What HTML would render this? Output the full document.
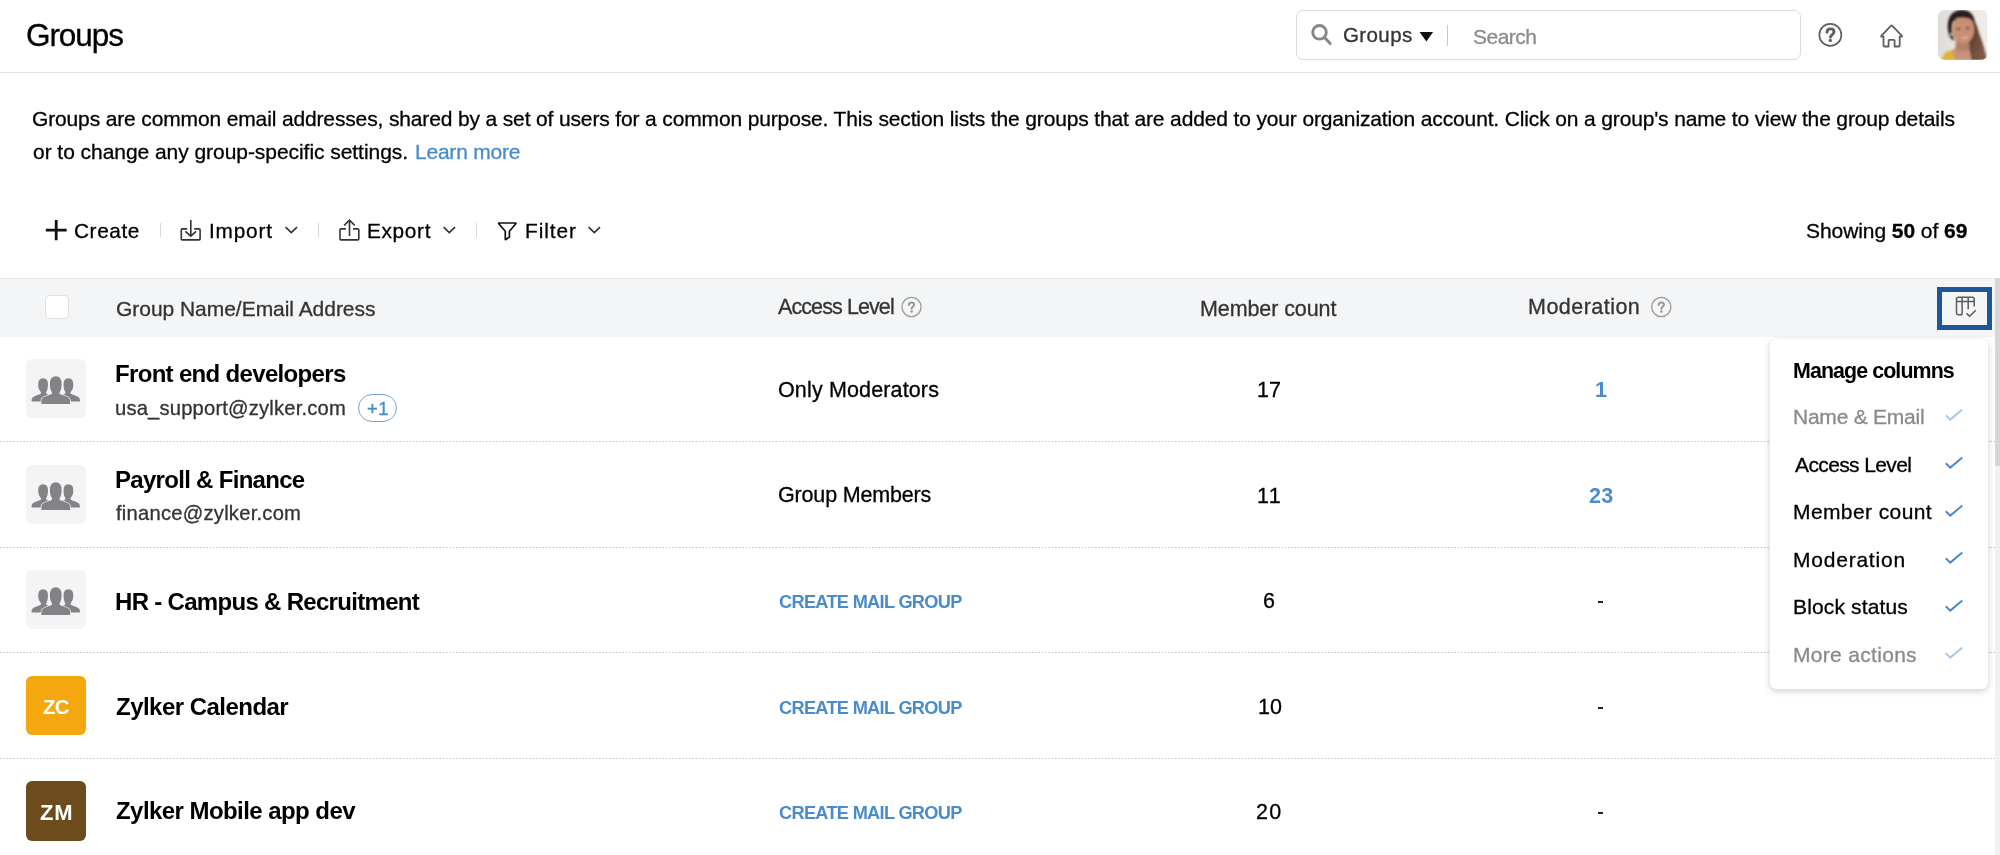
<!DOCTYPE html>
<html>
<head>
<meta charset="utf-8">
<title>Groups</title>
<style>
html,body{margin:0;padding:0;}
body{width:2000px;height:855px;position:relative;overflow:hidden;background:#fff;font-family:"Liberation Sans",sans-serif;color:#000;}
.t{position:absolute;white-space:nowrap;line-height:1;z-index:3;will-change:transform;}
.abs{position:absolute;}
.sep{position:absolute;left:0;width:1995px;height:1.3px;background-image:linear-gradient(to right,#c9c9c9 55%,rgba(255,255,255,0) 55%);background-size:3.33px 1.3px;}
.grp{position:absolute;left:26.2px;width:59.5px;height:59px;border-radius:6px;background:#f4f4f5;}
.grp svg{position:absolute;left:0;top:0;}
.av{position:absolute;left:26.2px;width:59.8px;height:59.5px;border-radius:6px;}
.chk{position:absolute;left:1944px;width:20px;height:15px;z-index:3;}
.cnt{position:absolute;}
</style>
</head>
<body>
<!-- ===== top bar ===== -->
<div class="abs" style="left:0;top:71.6px;width:2000px;height:1.2px;background:#e2e2e2;"></div>

<div class="abs" style="left:1295.7px;top:10.2px;width:505.1px;height:49.4px;border:1.2px solid #dcdcdc;border-radius:7px;box-sizing:border-box;"></div>
<svg class="abs" style="left:1305px;top:18px" width="32" height="32" viewBox="0 0 32 32">
 <circle cx="14.5" cy="14.35" r="6.8" fill="none" stroke="#878787" stroke-width="2.9"/>
 <line x1="19.6" y1="19.6" x2="25.2" y2="25.6" stroke="#878787" stroke-width="2.9" stroke-linecap="round"/>
</svg>
<svg class="abs" style="left:1418px;top:30px" width="17" height="13" viewBox="0 0 17 13"><path d="M1.6 2 L15.1 2 L8.35 11.5 Z" fill="#111"/></svg>
<div class="abs" style="left:1446.6px;top:24.6px;width:1.4px;height:21px;background:#c9c9c9;"></div>

<svg class="abs" style="left:1814px;top:18px" width="34" height="34" viewBox="0 0 34 34">
 <circle cx="16.35" cy="16.9" r="11.0" fill="none" stroke="#606060" stroke-width="1.7"/>
 <path d="M13 14.2 C13 11.6 14.5 10.9 16.5 10.9 C18.6 10.9 20 12 20 13.8 C20 16.1 17.4 16.5 16.5 19" fill="none" stroke="#606060" stroke-width="2.9" stroke-linecap="round"/>
 <circle cx="16.3" cy="22.4" r="1.7" fill="#606060"/>
</svg>
<svg class="abs" style="left:1876px;top:20px" width="32" height="32" viewBox="0 0 32 32">
 <path d="M7.5 16.6 L7.5 25.6 Q7.5 26.5 8.4 26.5 L12.6 26.5 L12.6 20.6 Q12.6 19.9 13.3 19.9 L17.9 19.9 Q18.6 19.9 18.6 20.6 L18.6 26.5 L22.8 26.5 Q23.7 26.5 23.7 25.6 L23.7 16.6 L25.4 16.6 Q26.5 16.6 25.7 15.7 L16.1 5.6 Q15.6 5.1 15.1 5.6 L5.5 15.7 Q4.7 16.6 5.8 16.6 Z" fill="none" stroke="#5f5f5f" stroke-width="1.8" stroke-linejoin="round"/>
</svg>

<!-- avatar photo -->
<svg class="abs" style="left:1938.2px;top:10.1px" width="49.6" height="49.8" viewBox="0 0 50 50">
 <defs>
  <clipPath id="avc"><rect x="0" y="0" width="50" height="50" rx="6" ry="6"/></clipPath>
  <filter id="bl" x="-20%" y="-20%" width="140%" height="140%"><feGaussianBlur stdDeviation="1.0"/></filter>
  <linearGradient id="bgg" x1="0" y1="0" x2="1" y2="0"><stop offset="0" stop-color="#dedddb"/><stop offset="1" stop-color="#f1ece7"/></linearGradient>
  <linearGradient id="hairr" x1="0" y1="0" x2="1" y2="1"><stop offset="0" stop-color="#3a2820"/><stop offset="0.5" stop-color="#6f4d3c"/><stop offset="1" stop-color="#8b6450"/></linearGradient>
 </defs>
 <g clip-path="url(#avc)">
  <rect x="0" y="0" width="50" height="50" fill="url(#bgg)"/>
  <g filter="url(#bl)">
   <path d="M31 6 C37 9 39 14 41 22 C44 30 47 38 50 52 L31 52 C32 42 31 30 31 12 Z" fill="url(#hairr)"/>
   <path d="M7 49.5 C9 43 13 40 18 39 L31 39 C33 43 34 48 33 52 L6 52 Z" fill="#c9937a"/>
   <path d="M18 30 L31 30 L31.5 40 C27 42 21 42 17.5 40 Z" fill="#b5806a"/>
   <path d="M15.9 30.5 C12 29 10 24 9.8 16 C10 7 14 0.5 23 0 C31 -0.5 36 4 37 11 L35 14 C31 8 22 6 15 12 C13 18 14 26 17 31 Z" fill="#2b1e1a"/>
   <ellipse cx="25.5" cy="19.5" rx="11" ry="14.3" fill="#c78f73"/>
   <path d="M14.5 6 C18 3 28 2 34 6 L36 11 C31 7 22 6 15 9.5 Z" fill="#2b1e1a"/>
   <path d="M21 26 Q26 29.8 31.5 25.8 Q27 31.5 21 26 Z" fill="#f4ebe7"/>
   <ellipse cx="20.5" cy="18.8" rx="1.7" ry="0.9" fill="#3d2722"/>
   <ellipse cx="30" cy="18.3" rx="1.7" ry="0.9" fill="#3d2722"/>
   <circle cx="13.4" cy="24.4" r="1" fill="#eee"/>
   <path d="M0 52 L3.7 49.5 L7.1 42.7 C9 41.5 11.5 40.8 13.9 40.7 L18 52 Z" fill="#dfb43a"/>
  </g>
 </g>
</svg>

<!-- ===== toolbar icons ===== -->
<svg class="abs" style="left:44px;top:218px" width="24" height="24" viewBox="0 0 24 24">
 <path d="M12.2 2.1 L12.2 22.2 M1.8 12.1 L22.7 12.1" stroke="#111" stroke-width="2.8" stroke-linecap="butt"/>
</svg>
<div class="abs" style="left:159.6px;top:223px;width:1.2px;height:14px;background:#d8d8d8;"></div>
<svg class="abs" style="left:174px;top:214px" width="32" height="32" viewBox="0 0 32 32">
 <path d="M13.2 14.9 L8.3 14.9 Q7.3 14.9 7.3 15.9 L7.3 24.9 Q7.3 25.9 8.3 25.9 L25.1 25.9 Q26.1 25.9 26.1 24.9 L26.1 15.9 Q26.1 14.9 25.1 14.9 L20.2 14.9" fill="none" stroke="#333" stroke-width="1.6"/>
 <path d="M16.8 6 L16.8 22 M11.3 17.3 L16.8 22.2 L22.1 17.3" fill="none" stroke="#333" stroke-width="1.6" stroke-linejoin="miter"/>
</svg>
<svg class="abs" style="left:284px;top:222px" width="16" height="16" viewBox="0 0 16 16"><path d="M1.6 5.2 L7.3 10.6 L13 5.2" fill="none" stroke="#333" stroke-width="1.7"/></svg>
<div class="abs" style="left:318.1px;top:223px;width:1.2px;height:14px;background:#d8d8d8;"></div>
<svg class="abs" style="left:333px;top:214px" width="32" height="32" viewBox="0 0 32 32">
 <path d="M12.9 14.9 L8 14.9 Q7 14.9 7 15.9 L7 24.9 Q7 25.9 8 25.9 L24.8 25.9 Q25.8 25.9 25.8 24.9 L25.8 15.9 Q25.8 14.9 24.8 14.9 L20 14.9" fill="none" stroke="#333" stroke-width="1.6"/>
 <path d="M16.5 22 L16.5 6.4 M11.2 11.4 L16.5 6.2 L21.7 11.4" fill="none" stroke="#333" stroke-width="1.6"/>
</svg>
<svg class="abs" style="left:442px;top:222px" width="16" height="16" viewBox="0 0 16 16"><path d="M1.6 5.2 L7.3 10.6 L13 5.2" fill="none" stroke="#333" stroke-width="1.7"/></svg>
<div class="abs" style="left:476.2px;top:223px;width:1.2px;height:14px;background:#d8d8d8;"></div>
<svg class="abs" style="left:492px;top:214px" width="32" height="32" viewBox="0 0 32 32">
 <path d="M7 9 L23.6 9 Q24.4 9 23.8 9.7 L17.4 17.2 L17.4 23 L13.8 25.5 Q13.3 25.8 13.3 25.2 L13.3 17.2 L6.8 9.7 Q6.2 9 7 9 Z" fill="none" stroke="#111" stroke-width="1.7" stroke-linejoin="round"/>
</svg>
<svg class="abs" style="left:587px;top:222px" width="16" height="16" viewBox="0 0 16 16"><path d="M1.6 5.2 L7.3 10.6 L13 5.2" fill="none" stroke="#333" stroke-width="1.7"/></svg>

<!-- ===== table header ===== -->
<div class="abs" style="left:0;top:278px;width:1995px;height:58.7px;background:#f4f5f7;"></div>
<div class="abs" style="left:0;top:278px;width:1995px;height:1.2px;background:#e9eaec;"></div>
<div class="abs" style="left:44.6px;top:294.6px;width:24.6px;height:24.6px;background:#fff;border:1.5px solid #dedfe1;border-radius:4px;box-sizing:border-box;"></div>
<svg class="abs" style="left:900px;top:296px" width="23" height="23" viewBox="0 0 23 23">
 <circle cx="11.5" cy="11" r="9.6" fill="none" stroke="#9a9a9a" stroke-width="1.3"/>
 <path d="M8.9 9 C8.9 7.2 10.1 6.5 11.5 6.5 C13 6.5 14.1 7.3 14.1 8.7 C14.1 10.4 12.1 10.6 11.6 12.7" fill="none" stroke="#9a9a9a" stroke-width="2.1" stroke-linecap="round"/>
 <circle cx="11.6" cy="15.5" r="1.25" fill="#9a9a9a"/>
</svg>
<svg class="abs" style="left:1650px;top:296px" width="23" height="23" viewBox="0 0 23 23">
 <circle cx="11.3" cy="11" r="9.6" fill="none" stroke="#9a9a9a" stroke-width="1.3"/>
 <path d="M8.7 9 C8.7 7.2 9.9 6.5 11.3 6.5 C12.8 6.5 13.9 7.3 13.9 8.7 C13.9 10.4 11.9 10.6 11.4 12.7" fill="none" stroke="#9a9a9a" stroke-width="2.1" stroke-linecap="round"/>
 <circle cx="11.4" cy="15.5" r="1.25" fill="#9a9a9a"/>
</svg>
<!-- manage columns button -->
<div class="abs" style="left:1937px;top:287px;width:54.7px;height:42.8px;border:5px solid #1d5799;box-sizing:border-box;"></div>
<svg class="abs" style="left:1950px;top:292px" width="30" height="30" viewBox="0 0 30 30">
 <path d="M12.1 22.8 L8.5 22.8 Q6.5 22.8 6.5 20.8 L6.5 7.3 Q6.5 5.3 8.5 5.3 L22.2 5.3 Q24.2 5.3 24.2 7.3 L24.2 14.4 M12.1 5.3 L12.1 22.8 M6.5 9.5 L24.2 9.5 M18.2 5.3 L18.2 17.2" fill="none" stroke="#5b5b5b" stroke-width="1.5"/>
 <path d="M16.5 21.4 L19.6 24.2 L25.8 18.2" fill="none" stroke="#5b5b5b" stroke-width="1.5"/>
</svg>
<!-- scrollbar -->
<div class="abs" style="left:1995px;top:278px;width:5px;height:577px;background:#f1f1f1;"></div>
<div class="abs" style="left:1995px;top:278px;width:5px;height:187.7px;background:#d6d6d6;"></div>

<!-- ===== rows ===== -->
<div class="sep" style="top:441px;"></div>
<div class="sep" style="top:546.6px;"></div>
<div class="sep" style="top:652.1px;"></div>
<div class="sep" style="top:757.7px;"></div>

<svg width="0" height="0" style="position:absolute">
 <defs>
  <g id="ppl">
   <path d="M5.6 42.6 L5.6 40.5 Q5.8 38 9 36.9 L14.4 34.9 Q15.3 34.4 15 33.2 Q12.2 30.5 12.2 25.6 Q12.2 19.2 17.1 19.2 Q22 19.2 22 25.6 Q22 30.5 20.2 33.2 Q19.9 34.4 20.8 34.9 L26 36.9 Q28 37.6 28.5 38.5 L28.5 42.6 Z" fill="#838387"/>
   <path d="M53.9 42.6 L53.9 40.5 Q53.7 38 50.5 36.9 L45.1 34.9 Q44.2 34.4 44.5 33.2 Q47.3 30.5 47.3 25.6 Q47.3 19.2 42.4 19.2 Q37.5 19.2 37.5 25.6 Q37.5 30.5 39.3 33.2 Q39.6 34.4 38.7 34.9 L33.5 36.9 Q31.5 37.6 31 38.5 L31 42.6 Z" fill="#838387"/>
   <path d="M15.4 44.9 L15.4 41.5 Q15.6 38.8 19 37.6 L25.2 35.2 Q26.3 34.6 26 33.2 Q23.9 30.5 23.9 25 Q23.9 17.3 29.75 17.3 Q35.6 17.3 35.6 25 Q35.6 30.5 33.5 33.2 Q33.2 34.6 34.3 35.2 L40.5 37.6 Q43.9 38.8 44.1 41.5 L44.1 44.9 Z" fill="#838387" stroke="#f4f4f5" stroke-width="1.4" paint-order="stroke"/>
  </g>
 </defs>
</svg>
<div class="grp" style="top:358.9px;"><svg width="59.5" height="59" viewBox="0 0 59.5 59"><use href="#ppl"/></svg></div>
<div class="grp" style="top:464.5px;"><svg width="59.5" height="59" viewBox="0 0 59.5 59"><use href="#ppl"/></svg></div>
<div class="grp" style="top:570px;"><svg width="59.5" height="59" viewBox="0 0 59.5 59"><use href="#ppl"/></svg></div>
<div class="av" style="top:675.8px;background:#f5a70f;"></div>
<div class="av" style="top:781.2px;background:#6c4c1c;"></div>

<div class="abs" style="left:358.2px;top:394.3px;width:38.6px;height:28.1px;border:1.3px solid #77a3cb;border-radius:14px;box-sizing:border-box;"></div>

<div class="abs" style="left:1598px;top:601px;width:5.4px;height:2px;background:#222;"></div>
<div class="abs" style="left:1598px;top:706.6px;width:5.4px;height:2px;background:#222;"></div>
<div class="abs" style="left:1598px;top:812.2px;width:5.4px;height:2px;background:#222;"></div>

<!-- ===== popup ===== -->
<div class="abs" style="left:1770px;top:339px;width:218.2px;height:349.8px;background:#fff;border-radius:6px;box-shadow:0 2px 7px rgba(0,0,0,0.2);z-index:2;"></div>
<svg class="chk" style="top:407px;" viewBox="0 0 20 15"><path d="M1.8 8.2 L6.3 12.6 L18.3 2.6" fill="none" stroke="#a9c7e6" stroke-width="1.9"/></svg>
<svg class="chk" style="top:455px;" viewBox="0 0 20 15"><path d="M1.8 8.2 L6.3 12.6 L18.3 2.6" fill="none" stroke="#4a88c5" stroke-width="1.9"/></svg>
<svg class="chk" style="top:502.5px;" viewBox="0 0 20 15"><path d="M1.8 8.2 L6.3 12.6 L18.3 2.6" fill="none" stroke="#4a88c5" stroke-width="1.9"/></svg>
<svg class="chk" style="top:550px;" viewBox="0 0 20 15"><path d="M1.8 8.2 L6.3 12.6 L18.3 2.6" fill="none" stroke="#4a88c5" stroke-width="1.9"/></svg>
<svg class="chk" style="top:597.5px;" viewBox="0 0 20 15"><path d="M1.8 8.2 L6.3 12.6 L18.3 2.6" fill="none" stroke="#4a88c5" stroke-width="1.9"/></svg>
<svg class="chk" style="top:645px;" viewBox="0 0 20 15"><path d="M1.8 8.2 L6.3 12.6 L18.3 2.6" fill="none" stroke="#a9c7e6" stroke-width="1.9"/></svg>
<div class="t" id="title" style="left:26.11px;top:20.23px;font-size:31.5px;color:#000;-webkit-text-stroke:0.3px currentColor;letter-spacing:-1.080px;">Groups</div>
<div class="t" id="sgroups" style="left:1342.77px;top:24.68px;font-size:20.5px;color:#333;-webkit-text-stroke:0.3px currentColor;letter-spacing:0.400px;">Groups</div>
<div class="t" id="ssearch" style="left:1473.24px;top:25.65px;font-size:21px;color:#8c8c8c;-webkit-text-stroke:0.3px currentColor;letter-spacing:-0.520px;">Search</div>
<div class="t" id="desc1" style="left:31.74px;top:107.65px;font-size:21px;color:#000;-webkit-text-stroke:0.3px currentColor;letter-spacing:-0.141px;">Groups are common email addresses, shared by a set of users for a common purpose. This section lists the groups that are added to your organization account. Click on a group's name to view the group details</div>
<div class="t" id="desc2" style="left:32.74px;top:140.65px;font-size:21px;color:#000;-webkit-text-stroke:0.3px currentColor;letter-spacing:-0.050px;">or to change any group-specific settings.</div>
<div class="t" id="learn" style="left:414.74px;top:140.65px;font-size:21px;color:#4a8bc9;-webkit-text-stroke:0.3px currentColor;letter-spacing:-0.222px;">Learn more</div>
<div class="t" id="create" style="left:73.75px;top:221.32px;font-size:20.8px;color:#000;-webkit-text-stroke:0.3px currentColor;letter-spacing:0.600px;">Create</div>
<div class="t" id="import" style="left:208.75px;top:221.32px;font-size:20.8px;color:#000;-webkit-text-stroke:0.3px currentColor;letter-spacing:0.800px;">Import</div>
<div class="t" id="export" style="left:367.00px;top:221.32px;font-size:20.8px;color:#000;-webkit-text-stroke:0.3px currentColor;letter-spacing:0.660px;">Export</div>
<div class="t" id="filter" style="left:524.75px;top:221.32px;font-size:20.8px;color:#000;-webkit-text-stroke:0.3px currentColor;letter-spacing:0.960px;">Filter</div>
<div class="t" id="show" style="left:1805.74px;top:220.15px;font-size:21px;color:#000;-webkit-text-stroke:0.3px currentColor;letter-spacing:-0.067px;">Showing <b>50</b> of <b>69</b></div>
<div class="t" id="hname" style="left:115.74px;top:298.05px;font-size:21px;color:#333;-webkit-text-stroke:0.3px currentColor;letter-spacing:-0.035px;">Group Name/Email Address</div>
<div class="t" id="haccess" style="left:778.21px;top:297.03px;font-size:21.5px;color:#333;-webkit-text-stroke:0.3px currentColor;letter-spacing:-0.909px;">Access Level</div>
<div class="t" id="hmember" style="left:1200.21px;top:298.53px;font-size:21.5px;color:#333;-webkit-text-stroke:0.3px currentColor;letter-spacing:-0.091px;">Member count</div>
<div class="t" id="hmod" style="left:1527.71px;top:297.03px;font-size:21.5px;color:#333;-webkit-text-stroke:0.3px currentColor;letter-spacing:0.467px;">Moderation</div>
<div class="t" id="r1name" style="left:115.06px;top:361.60px;font-size:24px;color:#000;font-weight:bold;letter-spacing:-0.674px;">Front end developers</div>
<div class="t" id="r1mail" style="left:115.29px;top:398.43px;font-size:20.2px;color:#333;-webkit-text-stroke:0.3px currentColor;letter-spacing:0.181px;">usa_support@zylker.com</div>
<div class="t" id="r1acc" style="left:777.71px;top:379.53px;font-size:21.5px;color:#000;-webkit-text-stroke:0.3px currentColor;letter-spacing:0.143px;">Only Moderators</div>
<div class="t" id="r1cnt" style="left:1257.21px;top:379.62px;font-size:21.5px;color:#000;-webkit-text-stroke:0.3px currentColor;">17</div>
<div class="t" id="r1mod" style="left:1595.21px;top:379.62px;font-size:21.5px;color:#4a8bc9;font-weight:bold;">1</div>
<div class="t" id="r2name" style="left:115.06px;top:467.60px;font-size:24px;color:#000;font-weight:bold;letter-spacing:-0.700px;">Payroll &amp; Finance</div>
<div class="t" id="r2mail" style="left:116.29px;top:502.93px;font-size:20.2px;color:#333;-webkit-text-stroke:0.3px currentColor;letter-spacing:0.235px;">finance@zylker.com</div>
<div class="t" id="r2acc" style="left:777.71px;top:485.12px;font-size:21.5px;color:#000;-webkit-text-stroke:0.3px currentColor;letter-spacing:-0.167px;">Group Members</div>
<div class="t" id="r2cnt" style="left:1257.31px;top:486.23px;font-size:21.5px;color:#000;-webkit-text-stroke:0.3px currentColor;letter-spacing:1.400px;">11</div>
<div class="t" id="r2mod" style="left:1588.71px;top:486.23px;font-size:21.5px;color:#4a8bc9;font-weight:bold;letter-spacing:0.400px;">23</div>
<div class="t" id="r3name" style="left:115.06px;top:589.60px;font-size:24px;color:#000;font-weight:bold;letter-spacing:-0.692px;">HR - Campus &amp; Recruitment</div>
<div class="t" id="r3acc" style="left:778.86px;top:592.53px;font-size:18.2px;color:#4a8bc9;font-weight:bold;letter-spacing:-0.688px;">CREATE MAIL GROUP</div>
<div class="t" id="r3cnt" style="left:1262.61px;top:590.73px;font-size:21.5px;color:#000;-webkit-text-stroke:0.3px currentColor;">6</div>
<div class="t" id="r4name" style="left:116.06px;top:695.20px;font-size:24px;color:#000;font-weight:bold;letter-spacing:-0.529px;">Zylker Calendar</div>
<div class="t" id="r4acc" style="left:778.86px;top:699.13px;font-size:18.2px;color:#4a8bc9;font-weight:bold;letter-spacing:-0.688px;">CREATE MAIL GROUP</div>
<div class="t" id="r4cnt" style="left:1257.51px;top:696.62px;font-size:21.5px;color:#000;-webkit-text-stroke:0.3px currentColor;letter-spacing:0.100px;">10</div>
<div class="t" id="r5name" style="left:116.06px;top:799.10px;font-size:24px;color:#000;font-weight:bold;letter-spacing:-0.560px;">Zylker Mobile app dev</div>
<div class="t" id="r5acc" style="left:778.86px;top:803.73px;font-size:18.2px;color:#4a8bc9;font-weight:bold;letter-spacing:-0.688px;">CREATE MAIL GROUP</div>
<div class="t" id="r5cnt" style="left:1256.41px;top:802.02px;font-size:21.5px;color:#000;-webkit-text-stroke:0.3px currentColor;letter-spacing:1.200px;">20</div>
<div class="t" id="plus1" style="left:366.89px;top:400.17px;font-size:18.5px;color:#4a8bc9;-webkit-text-stroke:0.3px currentColor;letter-spacing:0.400px;">+1</div>
<div class="t" id="zc" style="left:42.80px;top:696.58px;font-size:20.5px;color:#fff;font-weight:bold;letter-spacing:-0.700px;">ZC</div>
<div class="t" id="zm" style="left:40.00px;top:802.20px;font-size:22px;color:#fff;font-weight:bold;letter-spacing:0.900px;">ZM</div>
<div class="t" id="mc" style="left:1792.72px;top:361.21px;font-size:21.4px;color:#000;font-weight:bold;letter-spacing:-0.908px;">Manage columns</div>
<div class="t" id="mc1" style="left:1792.74px;top:405.90px;font-size:21px;color:#8a8a8a;-webkit-text-stroke:0.3px currentColor;letter-spacing:-0.236px;">Name &amp; Email</div>
<div class="t" id="mc2" style="left:1794.74px;top:454.15px;font-size:21px;color:#000;-webkit-text-stroke:0.3px currentColor;letter-spacing:-0.618px;">Access Level</div>
<div class="t" id="mc3" style="left:1792.74px;top:501.45px;font-size:21px;color:#000;-webkit-text-stroke:0.3px currentColor;letter-spacing:0.400px;">Member count</div>
<div class="t" id="mc4" style="left:1792.74px;top:549.25px;font-size:21px;color:#000;-webkit-text-stroke:0.3px currentColor;letter-spacing:0.778px;">Moderation</div>
<div class="t" id="mc5" style="left:1792.74px;top:596.15px;font-size:21px;color:#000;-webkit-text-stroke:0.3px currentColor;letter-spacing:0.145px;">Block status</div>
<div class="t" id="mc6" style="left:1792.74px;top:643.85px;font-size:21px;color:#8a8a8a;-webkit-text-stroke:0.3px currentColor;letter-spacing:0.309px;">More actions</div>
</body>
</html>
